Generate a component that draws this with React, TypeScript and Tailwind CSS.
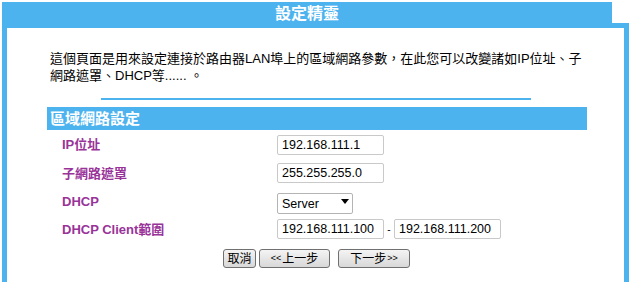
import React from "react";

const FONT = '"Liberation Sans", Arial, "Noto Sans CJK TC", sans-serif';

function TextBox({ value }: { value: string }) {
  return (
    <input
      readOnly
      value={value}
      className="w-[107px] h-[20px] border border-[#c9c9c9] rounded-[2px] bg-white px-[4px] text-[12.5px] text-black outline-none"
      style={{ fontFamily: FONT }}
    />
  );
}

function Btn({ children, w }: { children: React.ReactNode; w: string }) {
  return (
    <button
      className={`${w} h-[19px] border border-[#707070] rounded-[3px] bg-gradient-to-b from-[#f4f4f4] to-[#d8d8d8] text-[12px] leading-none text-black flex items-center justify-center`}
      style={{ fontFamily: FONT }}
    >
      {children}
    </button>
  );
}

export default function App() {
  const rows: { label: string; h: string; content: React.ReactNode }[] = [
    { label: "IP位址", h: "h-[29px]", content: <TextBox value="192.168.111.1" /> },
    { label: "子網路遮罩", h: "h-[28px]", content: <TextBox value="255.255.255.0" /> },
    {
      label: "DHCP",
      h: "h-[28px]",
      content: (
        <div className="relative w-[76px] h-[21px]">
          <select
            className="appearance-none w-full h-full border border-[#b4b4b4] rounded-[2px] bg-white pl-[4px] text-[12.5px] text-black outline-none"
            style={{ fontFamily: FONT }}
            defaultValue="Server"
          >
            <option>Server</option>
            <option>Disable</option>
          </select>
          <span className="pointer-events-none absolute right-[4px] top-[8px] w-0 h-0 border-l-[4px] border-r-[4px] border-t-[5px] border-l-transparent border-r-transparent border-t-black" />
        </div>
      ),
    },
    {
      label: "DHCP Client範圍",
      h: "h-[28px]",
      content: (
        <div className="flex items-center">
          <TextBox value="192.168.111.100" />
          <span className="w-[10px] text-center text-[10px] leading-none self-end mb-[4px] text-black">-</span>
          <TextBox value="192.168.111.200" />
        </div>
      ),
    },
  ];

  return (
    <div className="w-[632px] h-[282px] bg-white overflow-hidden pt-[2px] pl-[2px]" style={{ fontFamily: FONT }}>
      <div className="w-[627px] h-[280px] flex flex-col">
        <div className="w-[610px] h-[21px] shrink-0 bg-[#4db3ef] flex items-center justify-center text-white font-bold text-[16px] leading-none pt-[2px]">
          設定精靈
        </div>
        <div className="flex-1 border-x-[5px] border-t-[5px] border-[#4db3ef] bg-white flex flex-col">
          <p className="ml-[43px] mt-[22px] text-[13px] leading-[17px] text-black whitespace-nowrap">
            這個頁面是用來設定連接於路由器LAN埠上的區域網路參數，在此您可以改變諸如IP位址、子
            <br />
            網路遮罩、DHCP等...... 。
          </p>
          <div className="mx-auto w-[430px] h-[2px] mt-[14px] bg-[#4db3ef]" />
          <div className="ml-[40px] w-[540px] h-[23px] mt-[7px] bg-[#4db3ef] flex items-center pl-[3px] text-white font-bold text-[15px] leading-none">
            區域網路設定
          </div>
          <div className="ml-[40px] w-[540px] flex flex-col">
            {rows.map((r) => (
              <div key={r.label} className={`${r.h} flex items-center`}>
                <div className="w-[230px] pl-[15px] text-[13px] font-bold text-[#993399] leading-none">{r.label}</div>
                {r.content}
              </div>
            ))}
          </div>
          <div className="mt-[6px] flex justify-center items-center ml-[2px]">
            <Btn w="w-[33px]">取消</Btn>
            <div className="w-[3px]" />
            <Btn w="w-[71px]">
              <span className="text-[9px] mr-[1px]">&lt;&lt;</span>上一步
            </Btn>
            <div className="w-[8px]" />
            <Btn w="w-[72px]">
              下一步<span className="text-[9px] ml-[1px]">&gt;&gt;</span>
            </Btn>
          </div>
        </div>
      </div>
    </div>
  );
}
